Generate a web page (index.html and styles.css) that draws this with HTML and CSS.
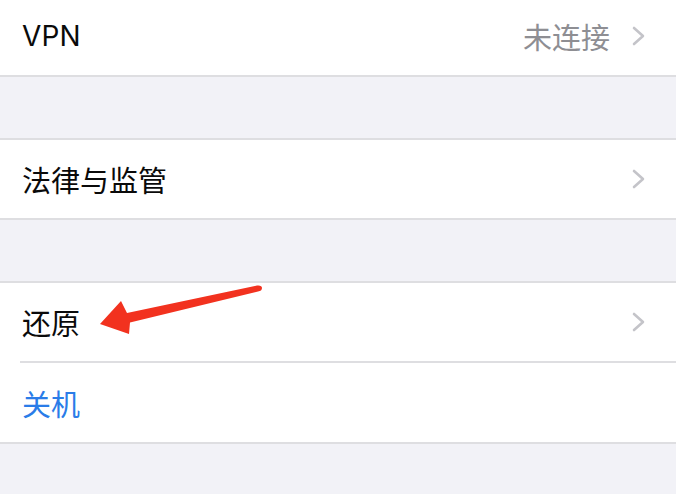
FILE: index.html
```html
<!DOCTYPE html>
<html lang="zh-CN">
<head>
<meta charset="utf-8">
<title>通用</title>
<link rel="stylesheet" href="styles.css">
</head>
<body>
<main class="settings">
  <section class="group group-first">
    <div class="cell">
      <span class="label latin">VPN</span>
      <span class="detail">未连接</span>
      <svg class="chevron" viewBox="0 0 13 20" aria-hidden="true"><polyline points="2,2 11,10 2,18"/></svg>
    </div>
  </section>

  <section class="group">
    <div class="cell">
      <span class="label">法律与监管</span>
      <svg class="chevron" viewBox="0 0 13 20" aria-hidden="true"><polyline points="2,2 11,10 2,18"/></svg>
    </div>
  </section>

  <section class="group">
    <div class="cell">
      <span class="label">还原</span>
      <svg class="chevron" viewBox="0 0 13 20" aria-hidden="true"><polyline points="2,2 11,10 2,18"/></svg>
    </div>
    <div class="cell cell-action">
      <span class="label action">关机</span>
    </div>
  </section>
</main>

<!-- red hint arrow pointing at the reset row -->
<svg class="pointer" width="676" height="494" viewBox="0 0 676 494" aria-hidden="true">
  <path d="M100 324 L121 301 L127 313 L257 285.5 Q262 285 262 288 Q262 291 258 291.5 L130 322.5 L129 334 Z"/>
</svg>
</body>
</html>
```

FILE: styles.css
```css
html, body {
  margin: 0;
  padding: 0;
}

body {
  width: 676px;
  height: 494px;
  overflow: hidden;
  background: #f2f2f7;
  font-family: "Inter", "Noto Sans CJK SC", sans-serif;
  -webkit-font-smoothing: antialiased;
}

.settings {
  display: flex;
  flex-direction: column;
  gap: 61px;
}

.group {
  background: #fff;
  border-top: 2px solid #dedee1;
  border-bottom: 2px solid #dedee1;
}

.group-first {
  border-top: none;
  margin-top: -4px;
}

.cell {
  display: flex;
  align-items: center;
  height: 78px;
  padding: 0 31px 0 22px;
  box-sizing: border-box;
}

.group-first .cell {
  height: 79px;
}

/* second cell in a group: inset hairline above it */
.cell + .cell {
  height: 81px;
  background:
    linear-gradient(#dedee1, #dedee1) 20px 0 / calc(100% - 20px) 2px no-repeat,
    #fff;
  padding-top: 2px;
}

.label {
  flex: 1;
  font-size: 29px;
  color: #0a0a0a;
}

.latin {
  font-size: 28px;
  letter-spacing: 0.2px;
}

.action {
  color: #2a7ce8;
}

.detail {
  font-size: 29px;
  color: #8e8e93;
  margin-right: 22px;
}

.chevron {
  width: 13px;
  height: 20px;
  fill: none;
  stroke: #c4c4c9;
  stroke-width: 2.6;
  stroke-linecap: round;
  stroke-linejoin: round;
}

.pointer {
  position: absolute;
  left: 0;
  top: 0;
  pointer-events: none;
}

.pointer path {
  fill: #f2321f;
}
```
